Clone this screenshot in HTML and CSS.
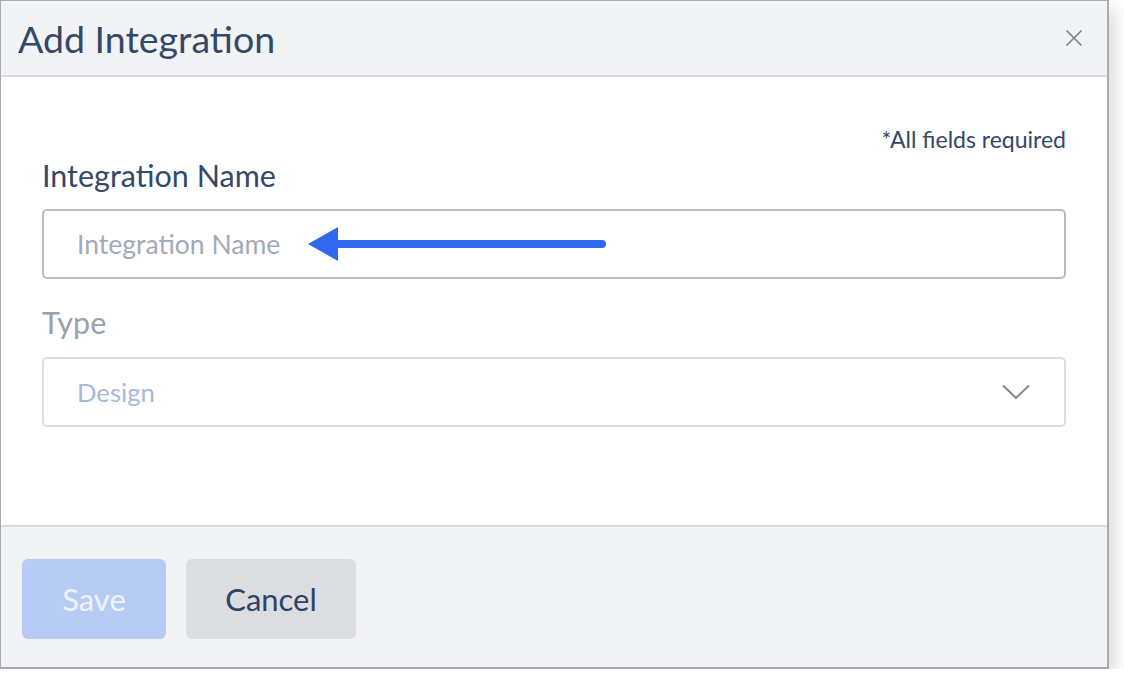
FILE: index.html
```html
<!DOCTYPE html>
<html lang="en">
<head>
    <meta charset="UTF-8">
    <meta name="viewport" content="width=device-width, initial-scale=1.0">
    <title>Add Integration</title>
    <link rel="stylesheet" href="styles.css">
</head>
<body>
    <div class="modal">
        <div class="modal-header">
            <h1>Add Integration</h1>
            <button class="close-btn" aria-label="Close">
                <svg width="18" height="18" viewBox="0 0 18 18">
                    <path d="M1.5 1.5 L16.5 16.5 M16.5 1.5 L1.5 16.5" stroke="#7d828b" stroke-width="1.6" fill="none"/>
                </svg>
            </button>
        </div>

        <div class="modal-body">
            <p class="required">*All fields required</p>

            <label class="field-label" for="integrationName">Integration Name</label>
            <div class="input-wrap">
                <input id="integrationName" class="text-input" type="text" placeholder="Integration Name">
                <!-- pointer callout -->
                <svg class="callout" width="300" height="36" viewBox="0 0 300 36">
                    <polygon points="0,18 30,1 30,35" fill="#3169ec"/>
                    <line x1="28" y1="18" x2="294" y2="18" stroke="#3169ec" stroke-width="8" stroke-linecap="round"/>
                </svg>
            </div>

            <label class="field-label disabled">Type</label>
            <div class="select disabled">
                <span>Design</span>
                <svg width="28" height="16" viewBox="0 0 28 16">
                    <polyline points="1,1.5 14,14 27,1.5" stroke="#7b8089" stroke-width="1.8" fill="none"/>
                </svg>
            </div>
        </div>

        <div class="modal-footer">
            <button class="btn btn-save" disabled>Save</button>
            <button class="btn btn-cancel">Cancel</button>
        </div>
    </div>
</body>
</html>
```

FILE: styles.css
```css
html, body {
    margin: 0;
    padding: 0;
    background: #ffffff;
    font-family: Lato, "Liberation Sans", sans-serif;
}

.modal {
    width: 1106px;
    height: 666px;
    display: flex;
    flex-direction: column;
    border: 1px solid #a9abb3;
    border-right-width: 2px;
    border-bottom-width: 2px;
    background: #ffffff;
    box-shadow: 6px 8px 16px rgba(0, 0, 0, 0.14);
}

.modal-header {
    height: 74px;
    display: flex;
    align-items: center;
    justify-content: space-between;
    padding: 0 24px 0 17px;
    background: #f2f3f5;
    border-bottom: 2px solid #d9dadf;
}

.modal-header h1 {
    margin: 0;
    font-size: 37.5px;
    font-weight: 400;
    color: #34486a;
}

.close-btn {
    background: none;
    border: none;
    padding: 0;
    display: flex;
    cursor: pointer;
}

.modal-body {
    flex: 1;
    padding: 0 41px 0 41px;
}

.required {
    margin: 49px 0 0;
    text-align: right;
    font-size: 23px;
    line-height: 26px;
    color: #34486a;
}

.field-label {
    display: block;
    margin-top: 5px;
    font-size: 30.5px;
    line-height: 36px;
    color: #34486a;
}

.field-label.disabled {
    margin-top: 25px;
    color: #9aa1ad;
}

.input-wrap {
    position: relative;
    margin-top: 16px;
}

.text-input {
    display: block;
    box-sizing: border-box;
    width: 100%;
    height: 70px;
    padding: 0 33px;
    border: 2px solid #b9bbbf;
    border-radius: 5px;
    font-family: inherit;
    font-size: 26.5px;
    color: #34486a;
    outline: none;
}

.text-input::placeholder {
    color: #a2a9b7;
}

.callout {
    position: absolute;
    left: 266px;
    top: 17px;
}

.select {
    box-sizing: border-box;
    height: 70px;
    margin-top: 17px;
    display: flex;
    align-items: center;
    justify-content: space-between;
    padding: 0 34px 0 33px;
    border: 2px solid #dcdde0;
    border-radius: 5px;
    font-size: 25.7px;
    color: #a6b9da;
}

.modal-footer {
    height: 108px;
    display: flex;
    gap: 20px;
    padding: 32px 21px 0;
    background: #f2f3f5;
    border-top: 2px solid #d9dadf;
}

.btn {
    height: 80px;
    border: none;
    border-radius: 6px;
    font-family: inherit;
    font-size: 31px;
    cursor: pointer;
}

.btn-save {
    width: 144px;
    background: #b8cbf4;
    color: #eef3fd;
}

.btn-cancel {
    width: 170px;
    background: #dcdde0;
    color: #2f4366;
}
```
